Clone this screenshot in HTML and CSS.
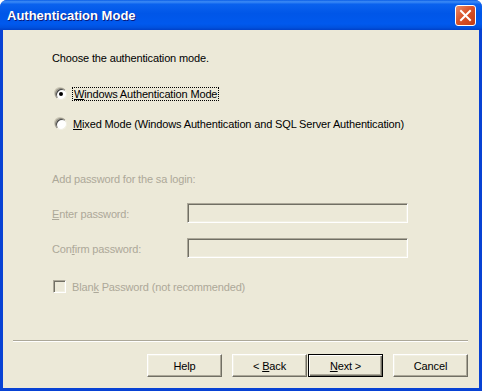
FILE: index.html
```html
<!DOCTYPE html>
<html lang="en">
<head>
    <meta charset="UTF-8">
    <title>Authentication Mode</title>
    <link rel="stylesheet" href="styles.css">
</head>
<body>
    <div class="window">
        <div class="titlebar">
            <span class="title">Authentication Mode</span>
            <span class="close">
                <svg width="13" height="13" viewBox="0 0 13 13">
                    <path d="M2 2 L11 11 M11 2 L2 11" stroke="#fff" stroke-width="2" stroke-linecap="square"/>
                </svg>
            </span>
        </div>

        <div class="content">
            <div class="main">
                <p class="intro">Choose the authentication mode.</p>

                <div class="radio-row first">
                    <span class="radio checked"><span class="dot"></span></span>
                    <span class="focus"><u>W</u>indows Authentication Mode</span>
                </div>
                <div class="radio-row second">
                    <span class="radio"></span>
                    <span class="label"><u>M</u>ixed Mode (Windows Authentication and SQL Server Authentication)</span>
                </div>

                <p class="disabled sa">Add password for the sa login:</p>

                <div class="field-row first">
                    <span class="disabled field-label"><u>E</u>nter password:</span>
                    <span class="input"></span>
                </div>
                <div class="field-row second">
                    <span class="disabled field-label">Con<u>f</u>irm password:</span>
                    <span class="input"></span>
                </div>

                <div class="check-row">
                    <span class="checkbox"></span>
                    <span class="disabled">Blan<u>k</u> Password (not recommended)</span>
                </div>
            </div>

            <div class="separator"></div>

            <div class="buttons">
                <button class="btn help">Help</button>
                <button class="btn back">&lt; <u>B</u>ack</button>
                <button class="btn next default"><u>N</u>ext &gt;</button>
                <button class="btn cancel">Cancel</button>
            </div>
        </div>
    </div>
</body>
</html>
```

FILE: styles.css
```css
body {
    margin: 0;
    font-family: 'Liberation Sans', Arial, sans-serif;
    font-size: 11px;
    letter-spacing: -0.15px;
    color: #000;
}
.window {
    width: 482px;
    height: 391px;
    display: flex;
    flex-direction: column;
    background: #0842d4;
    border-radius: 7px 7px 0 0;
    overflow: hidden;
}
.titlebar {
    height: 30px;
    flex: none;
    display: flex;
    align-items: center;
    justify-content: space-between;
    padding: 0 6px 0 7px;
    background: linear-gradient(to bottom, #0a5de6 0%, #3d8cf6 6%, #0a62ee 14%, #0056e8 45%, #0059ee 80%, #0051de 92%, #0040c8 100%);
}
.title {
    color: #fff;
    font-weight: bold;
    font-size: 13px;
    letter-spacing: 0;
    text-shadow: 1px 1px 0 #0a1a7a;
    margin-top: 1px;
}
.close {
    width: 19px;
    height: 19px;
    border: 1px solid #fff;
    border-radius: 3px;
    background: linear-gradient(135deg, #e98c6c 0%, #d9532a 45%, #c43c14 100%);
    display: flex;
    align-items: center;
    justify-content: center;
    margin-top: 1px;
}
.content {
    flex: 1;
    margin: 0 3px 3px;
    background: #ece9d8;
    display: flex;
    flex-direction: column;
}
.main {
    flex: 1;
    padding: 22px 0 0 49px;
}
p {
    margin: 0;
}
.intro, .sa {
    line-height: 13px;
}
.disabled {
    color: #aca899;
}
u {
    text-decoration: underline;
    text-underline-offset: 1px;
}
.radio-row {
    display: flex;
    align-items: center;
    height: 14px;
}
.radio-row.first {
    margin-top: 22px;
}
.radio-row.second {
    margin-top: 16px;
}
.radio {
    width: 12px;
    height: 12px;
    border-radius: 50%;
    background: #fff;
    box-sizing: border-box;
    border: 1px solid;
    border-color: #8d8a7c #f1efe2 #f1efe2 #8d8a7c;
    box-shadow: inset 1px 1px 0 #444, -1px -1px 0 #c9c5b4;
    margin: 0 6px 0 3px;
    display: flex;
    align-items: center;
    justify-content: center;
}
.dot {
    width: 4px;
    height: 4px;
    border-radius: 50%;
    background: #000;
}
.focus {
    border: 1px dotted #000;
    padding: 0 1px;
    line-height: 12px;
    margin-left: -1px;
}
.label {
    line-height: 13px;
}
.sa {
    margin-top: 42px;
}
.field-row {
    display: flex;
    align-items: center;
    height: 20px;
}
.field-row.first {
    margin-top: 17px;
}
.field-row.second {
    margin-top: 15px;
}
.field-label {
    flex: 0 0 135px;
    padding-top: 1px;
}
.input {
    width: 221px;
    height: 20px;
    box-sizing: border-box;
    border: 1px solid;
    border-color: #aca899 #fff #fff #aca899;
    box-shadow: inset 1px 1px 0 #716f64, inset -1px -1px 0 #f1efe2;
    background: #ece9d8;
}
.check-row {
    display: flex;
    align-items: center;
    margin-top: 22px;
    height: 13px;
}
.checkbox {
    width: 13px;
    height: 13px;
    box-sizing: border-box;
    border: 1px solid;
    border-color: #aca899 #fff #fff #aca899;
    box-shadow: inset 1px 1px 0 #716f64, inset -1px -1px 0 #f1efe2;
    background: #ece9d8;
    margin: 0 6px 0 1px;
}
.separator {
    height: 2px;
    box-sizing: border-box;
    border-top: 1px solid #aca899;
    border-bottom: 1px solid #fff;
    margin: 0 11px 0 10px;
}
.buttons {
    display: flex;
    justify-content: flex-end;
    padding: 12px 11px 11px 0;
}
.btn {
    width: 75px;
    height: 23px;
    box-sizing: border-box;
    font-family: 'Liberation Sans', Arial, sans-serif;
    font-size: 11px;
    letter-spacing: -0.15px;
    color: #000;
    background: #ece9d8;
    border: 1px solid;
    border-color: #fff #716f64 #716f64 #fff;
    box-shadow: inset -1px -1px 0 #aca899, inset 1px 1px 0 #f1efe2;
    padding: 0;
}
.btn.back {
    margin-left: 10px;
}
.btn.next {
    margin-left: 1px;
}
.btn.cancel {
    margin-left: 10px;
}
.btn.default {
    border: 1px solid #000;
    box-shadow: inset 1px 1px 0 #fff, inset -1px -1px 0 #716f64, inset -2px -2px 0 #aca899;
}
```
